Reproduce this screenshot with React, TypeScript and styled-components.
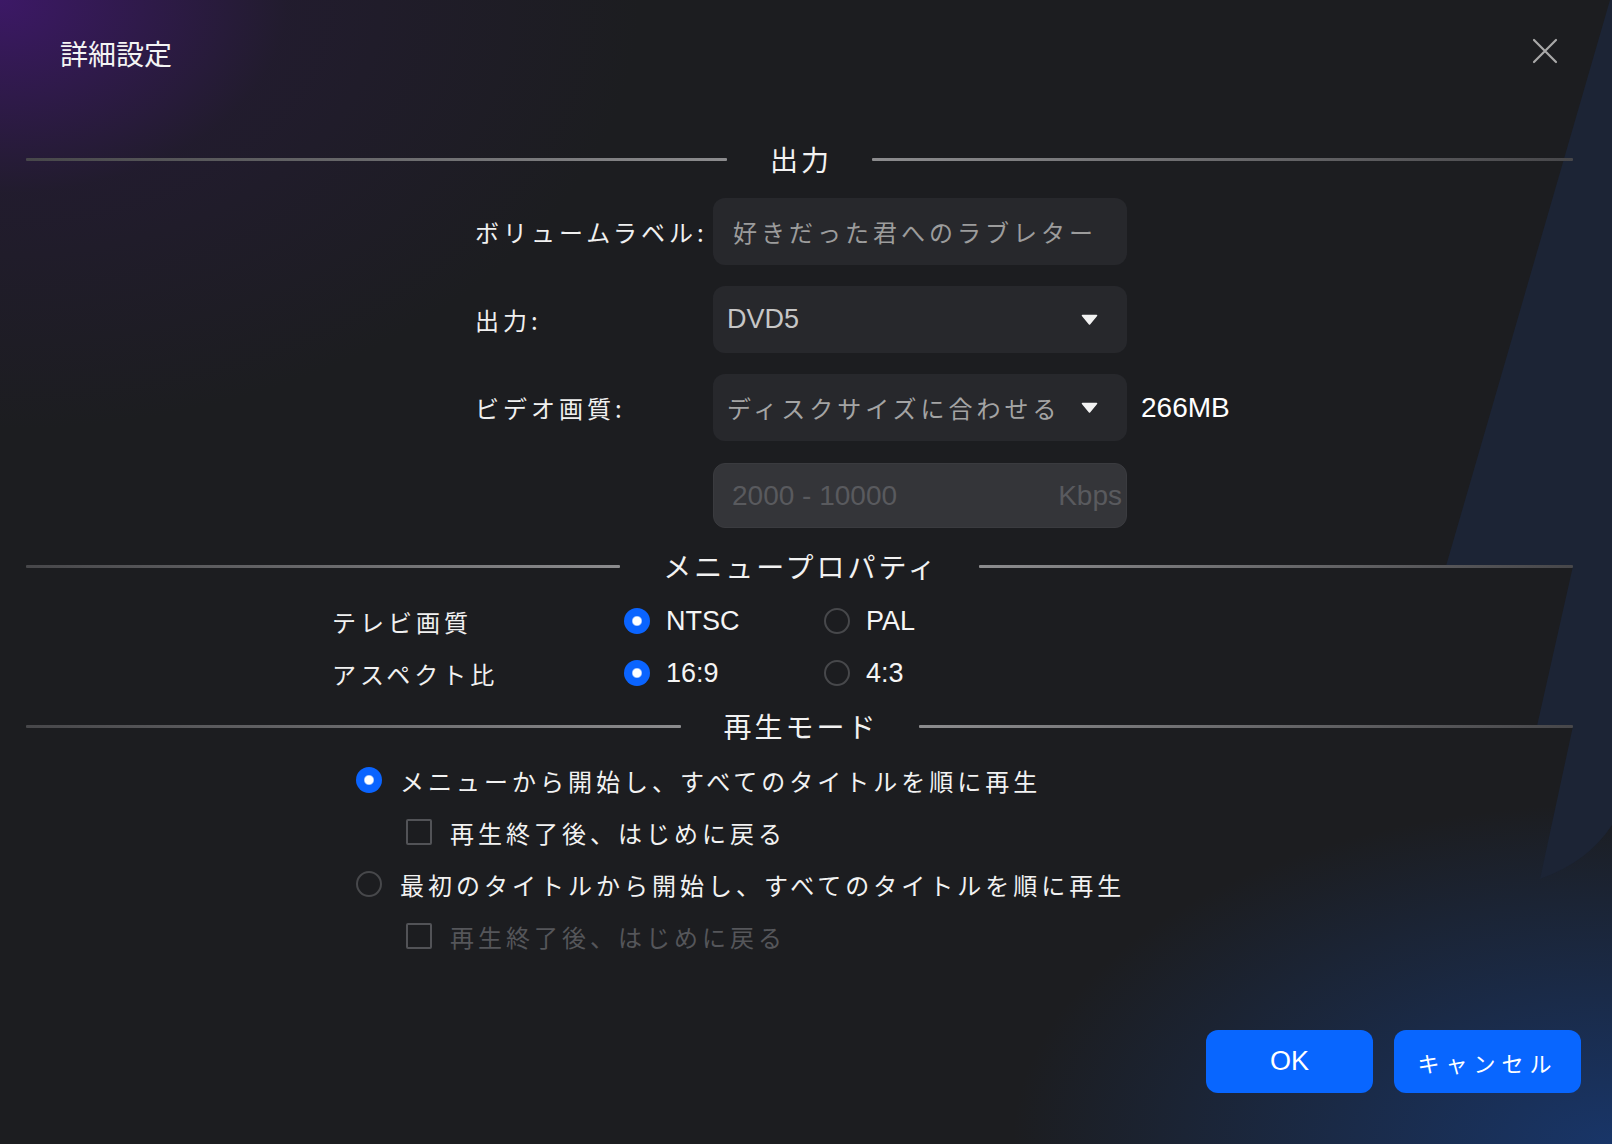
import React from 'react'
import styled, { createGlobalStyle } from 'styled-components'

const GlobalStyle = createGlobalStyle`
  html, body {
    margin: 0;
    padding: 0;
    background: #1c1d20;
  }
  body {
    font-family: 'Liberation Sans', 'Noto Sans CJK JP', sans-serif;
  }
  * {
    box-sizing: border-box;
  }
`

const JP = `'Noto Sans CJK JP', sans-serif`

const Dialog = styled.div`
  position: relative;
  isolation: isolate;
  width: 1612px;
  height: 1144px;
  overflow: hidden;
  display: flex;
  flex-direction: column;
  color: #f2f2f2;
  background:
    radial-gradient(ellipse 640px 430px at 0 0, rgba(62, 24, 106, 0.95), rgba(40, 26, 62, 0.45) 45%, rgba(28, 29, 32, 0) 100%),
    radial-gradient(ellipse 600px 340px at 100% 100%, rgba(24, 56, 112, 0.9), rgba(28, 29, 32, 0) 100%),
    #1c1d20;
`

const Backdrop = styled.svg`
  position: absolute;
  inset: 0;
  width: 100%;
  height: 100%;
  z-index: -1;
  pointer-events: none;
`

const Header = styled.header`
  height: 106px;
  display: flex;
  align-items: center;
  justify-content: space-between;
  padding: 0 54px 0 60px;
`

const Title = styled.h1`
  margin: 0;
  font-family: ${JP};
  font-size: 28px;
  font-weight: 400;
  color: #f4f4f4;
`

const CloseButton = styled.button`
  width: 26px;
  height: 26px;
  margin-top: -4px;
  padding: 0;
  border: 0;
  background: none;
  color: #a9a9a9;
  display: flex;
  cursor: pointer;
`

const SectionHead = styled.div<{ $top: number }>`
  display: flex;
  align-items: center;
  height: 40px;
  margin: ${p => p.$top}px 39px 0 26px;
`

const Rule = styled.span<{ $side: 'left' | 'right' }>`
  flex: 1;
  height: 3px;
  border-radius: 1px;
  background: linear-gradient(
    ${p => (p.$side === 'left' ? 'to right' : 'to left')},
    #47474a,
    #8c8c8e
  );
`

const SectionTitle = styled.h2`
  margin: 0;
  padding: 0 40px 0 43px;
  font-family: ${JP};
  font-size: 28px;
  font-weight: 400;
  line-height: 40px;
  letter-spacing: 3px;
  color: #f2f2f2;
  white-space: nowrap;
`

const FormGrid = styled.div`
  display: grid;
  grid-template-columns: 238px 414px auto;
  grid-auto-rows: 67px;
  row-gap: 21px;
  align-items: center;
  margin: 19px 0 0 475px;
`

const Label = styled.span`
  font-family: ${JP};
  font-size: 24px;
  letter-spacing: 4px;
  color: #f0f0f0;
  white-space: nowrap;
`

const TextInput = styled.input`
  height: 67px;
  width: 100%;
  border: 0;
  outline: none;
  border-radius: 12px;
  background: #27282c;
  padding: 0 12px 0 20px;
  font-family: ${JP};
  font-size: 24px;
  letter-spacing: 4px;
  color: #9c9c9c;
`

const Select = styled.div`
  height: 67px;
  border-radius: 12px;
  background: #27282c;
  display: flex;
  align-items: center;
  justify-content: space-between;
  padding: 0 29px 0 14px;
  cursor: pointer;
`

const SelectValue = styled.span<{ $latin?: boolean }>`
  font-family: ${p => (p.$latin ? `'Liberation Sans', sans-serif` : JP)};
  font-size: ${p => (p.$latin ? 27 : 24)}px;
  letter-spacing: ${p => (p.$latin ? 0 : 4)}px;
  color: ${p => (p.$latin ? '#c6c6c6' : '#a4a4a4')};
  white-space: nowrap;
`

const RateBox = styled.div`
  height: 65px;
  border-radius: 12px;
  background: #343539;
  border: 1px solid #3a3b3f;
  display: flex;
  align-items: center;
  justify-content: space-between;
  padding: 0 4px 0 18px;
  font-size: 28px;
  color: #595a5e;
`

const SizeText = styled.span`
  margin-left: 14px;
  font-size: 28px;
  color: #ffffff;
`

const OptionGrid = styled.div`
  display: grid;
  grid-template-columns: 292px 200px 200px;
  grid-auto-rows: 40px;
  row-gap: 12px;
  align-items: center;
  margin: 15px 0 0 332px;
`

const RadioOption = styled.label`
  display: flex;
  align-items: center;
  gap: 16px;
  font-size: 27px;
  color: #f5f5f5;
  cursor: pointer;
`

const RadioMark = styled.span<{ $checked?: boolean }>`
  flex: none;
  width: 26px;
  height: 26px;
  border-radius: 50%;
  ${p =>
    p.$checked
      ? 'background: radial-gradient(circle, #ffffff 0 4px, #0a64ff 5.5px);'
      : 'border: 2px solid #47484b;'}
`

const ModeList = styled.div`
  display: flex;
  flex-direction: column;
  gap: 12px;
  margin: 14px 0 0 356px;
`

const ModeRow = styled.label<{ $indent?: boolean; $disabled?: boolean }>`
  height: 40px;
  display: flex;
  align-items: center;
  gap: 18px;
  margin-left: ${p => (p.$indent ? 50 : 0)}px;
  font-family: ${JP};
  font-size: 24px;
  letter-spacing: 4px;
  color: ${p => (p.$disabled ? '#55565a' : '#f2f2f2')};
  white-space: nowrap;
  cursor: pointer;
`

const CheckMark = styled.span`
  flex: none;
  width: 26px;
  height: 26px;
  border: 2px solid #525357;
  border-radius: 2px;
`

const Footer = styled.footer`
  margin-top: auto;
  display: flex;
  justify-content: flex-end;
  gap: 21px;
  padding: 0 31px 51px 0;
`

const Button = styled.button<{ $width: number; $jp?: boolean }>`
  width: ${p => p.$width}px;
  height: 63px;
  border: 0;
  border-radius: 12px;
  background: #0866ff;
  color: #ffffff;
  font-family: ${p => (p.$jp ? JP : `'Liberation Sans', sans-serif`)};
  font-size: ${p => (p.$jp ? 22 : 27)}px;
  letter-spacing: ${p => (p.$jp ? 6 : 0)}px;
  cursor: pointer;
`

const Caret = () => (
  <svg width="17" height="12" viewBox="0 0 17 12">
    <path d="M1.5 1.5 L15.5 1.5 L8.5 10 Z" fill="#f2f2f2" stroke="#f2f2f2" strokeWidth="1.6" strokeLinejoin="round" />
  </svg>
)

const Section = ({ title, top }: { title: string; top: number }) => (
  <SectionHead $top={top}>
    <Rule $side="left" />
    <SectionTitle>{title}</SectionTitle>
    <Rule $side="right" />
  </SectionHead>
)

export default function App() {
  return (
    <>
      <GlobalStyle />
      <Dialog>
        <Backdrop viewBox="0 0 1612 1144" preserveAspectRatio="none">
          <path
            d="M1610 0 L1446 566 L1573 566 L1537 726 L1573 726 L1540 879 Q1588 862 1612 825 L1612 0 Z"
            fill="#1c2435"
          />
        </Backdrop>

        <Header>
          <Title>詳細設定</Title>
          <CloseButton aria-label="閉じる">
            <svg width="26" height="26" viewBox="0 0 26 26">
              <path d="M2 2 L24 24 M24 2 L2 24" stroke="currentColor" strokeWidth="2.2" strokeLinecap="round" />
            </svg>
          </CloseButton>
        </Header>

        <Section title="出力" top={33} />
        <FormGrid>
          <Label>ボリュームラベル:</Label>
          <TextInput readOnly value="好きだった君へのラブレター" />
          <span />

          <Label>出力:</Label>
          <Select>
            <SelectValue $latin>DVD5</SelectValue>
            <Caret />
          </Select>
          <span />

          <Label>ビデオ画質:</Label>
          <Select>
            <SelectValue>ディスクサイズに合わせる</SelectValue>
            <Caret />
          </Select>
          <SizeText>266MB</SizeText>

          <span />
          <RateBox>
            <span>2000 - 10000</span>
            <span>Kbps</span>
          </RateBox>
          <span />
        </FormGrid>

        <Section title="メニュープロパティ" top={17} />
        <OptionGrid>
          <Label>テレビ画質</Label>
          <RadioOption>
            <RadioMark $checked />
            NTSC
          </RadioOption>
          <RadioOption>
            <RadioMark />
            PAL
          </RadioOption>

          <Label>アスペクト比</Label>
          <RadioOption>
            <RadioMark $checked />
            16:9
          </RadioOption>
          <RadioOption>
            <RadioMark />
            4:3
          </RadioOption>
        </OptionGrid>

        <Section title="再生モード" top={13} />
        <ModeList>
          <ModeRow>
            <RadioMark $checked />
            メニューから開始し、すべてのタイトルを順に再生
          </ModeRow>
          <ModeRow $indent>
            <CheckMark />
            再生終了後、はじめに戻る
          </ModeRow>
          <ModeRow>
            <RadioMark />
            最初のタイトルから開始し、すべてのタイトルを順に再生
          </ModeRow>
          <ModeRow $indent $disabled>
            <CheckMark />
            再生終了後、はじめに戻る
          </ModeRow>
        </ModeList>

        <Footer>
          <Button $width={167}>OK</Button>
          <Button $width={187} $jp>
            キャンセル
          </Button>
        </Footer>
      </Dialog>
    </>
  )
}
